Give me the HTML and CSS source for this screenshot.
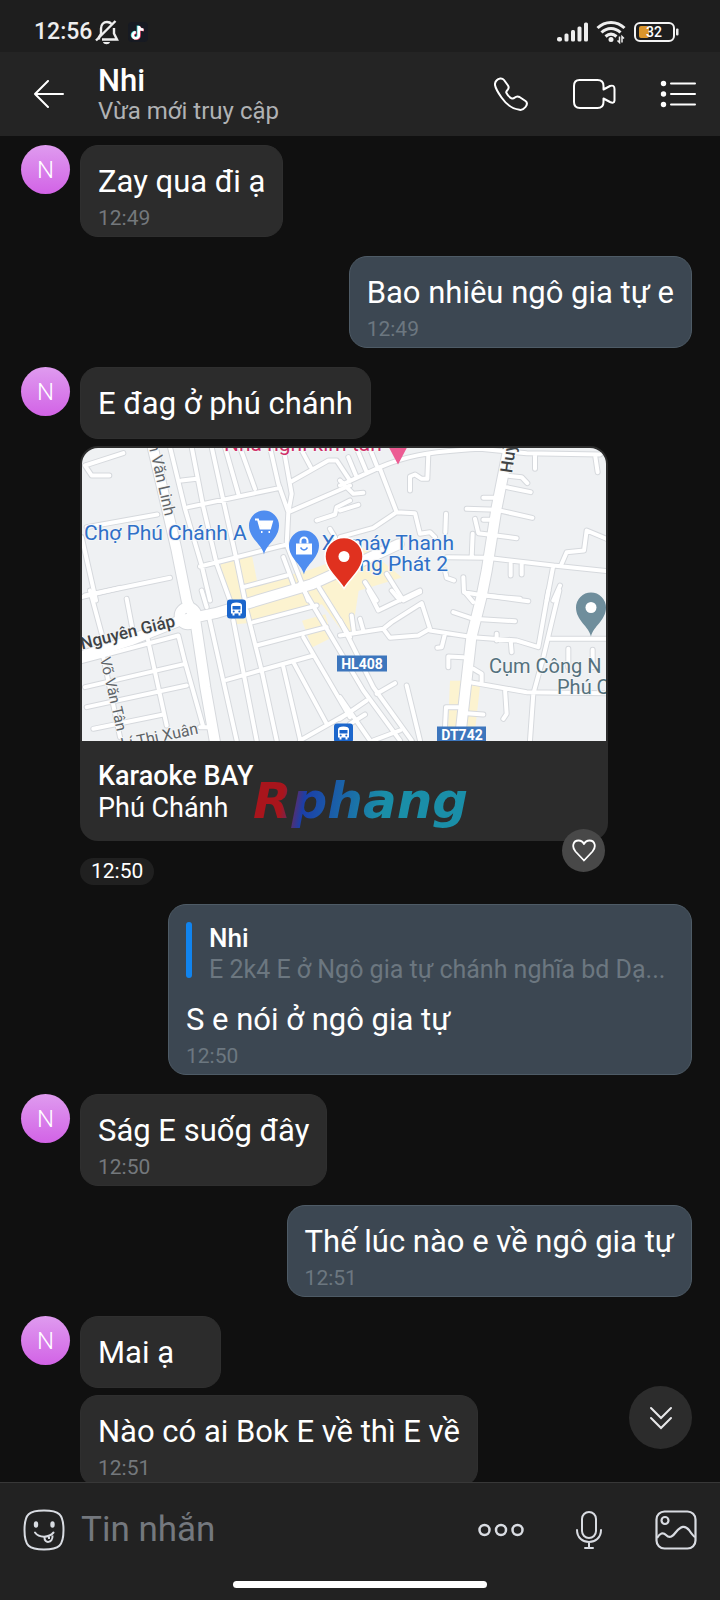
FILE: index.html
```html
<!DOCTYPE html>
<html lang="vi">
<head>
<meta charset="utf-8">
<meta name="viewport" content="width=device-width, initial-scale=1">
<title>Nhi</title>
<link rel="stylesheet" href="styles.css">
</head>
<body>
<div class="app">
  <div class="status">
    <span class="clock">12:56</span>
    <svg class="bell" width="24" height="26" viewBox="0 0 24 26" fill="none" stroke="#eee" stroke-width="2.400">
      <path d="M4 20.500V18L6 15V9.500C6 5.500 8.500 3 12 3C14 3 15.500 3.700 16.600 5M19 9V14.500L22 20.500H7"/>
      <path d="M1 21.500L20.500 2"/><path d="M8 23H15C14.500 26 8.500 26 8 23Z" fill="#eee" stroke="none"/>
    </svg>
    <svg class="tiktok" width="20" height="20" viewBox="0 0 20 20">
      <rect width="20" height="20" rx="4" fill="#171a22"/>
      <g fill="none" stroke-width="2.600">
        <path d="M10 3.500V13A3 3 0 1 1 7 10M10 4C10.500 6.500 12.500 7.500 15 7.500" stroke="#3fd9dc"/>
        <path d="M11.500 4.500V13.500A3 3 0 1 1 8.500 10.800M11.500 5C12 7 13.500 8 16 8.200" stroke="#e23a62"/>
        <path d="M10.800 4V13.200A3 3 0 1 1 7.800 10.300M10.800 4.500C11.300 6.700 13 7.700 15.500 7.800" stroke="#fff"/>
      </g>
    </svg>
    <svg class="signal" width="32" height="20" viewBox="0 0 32 20" fill="#eee">
      <rect x="0" y="15" width="5" height="4.500" rx="2"/><rect x="7.500" y="11.500" width="4" height="8" rx="1.500"/><rect x="14" y="8" width="4" height="11.500" rx="1.500"/><rect x="20.500" y="4.500" width="4" height="15" rx="1.500"/><rect x="27" y="0.500" width="4" height="19" rx="1.500"/>
    </svg>
    <svg class="wifi" width="30" height="24" viewBox="0 0 30 24" fill="none" stroke="#eee" stroke-width="3">
      <path d="M1.500 8C9 0.500 21 0.500 28.500 8"/><path d="M5.500 12.500C11 7 19 7 24.500 12.500"/><path d="M9.500 16.500C13 13.500 17 13.500 20.500 16.500"/>
      <circle cx="15" cy="19.500" r="2.500" fill="#eee" stroke="none"/>
      <path d="M23.500 16.500V22.500L21.500 20.500M26 22.500V16.500L28 18.500" stroke-width="1.500"/>
    </svg>
    <svg class="battery" width="46" height="20" viewBox="0 0 46 20">
      <rect x="1" y="1" width="39" height="18" rx="5" fill="none" stroke="#f4f4f4" stroke-width="2"/>
      <rect x="5" y="4" width="10" height="12" rx="2" fill="#dc962c"/>
      <rect x="42" y="6.500" width="2.500" height="7" rx="1" fill="#eee"/>
      <text x="20" y="15" text-anchor="middle" class="battery-text">32</text>
    </svg>
  </div>

  <header class="header">
    <button class="icon-button back" aria-label="Quay lại">
      <svg width="30" height="28" viewBox="0 0 30 28" fill="none" stroke="#fff" stroke-width="2" stroke-linecap="round" stroke-linejoin="round"><path d="M14 1L1 14L14 27M1 14H29"/></svg>
    </button>
    <div class="contact">
      <h1 class="contact-name">Nhi</h1>
      <p class="contact-state">Vừa mới truy cập</p>
    </div>
    <nav class="actions">
      <button class="icon-button" aria-label="Gọi thoại">
        <svg width="34" height="34" viewBox="0 0 34 34" fill="none" stroke="#fff" stroke-width="2" stroke-linejoin="round"><path d="M2.500 3.500C4.500 1.200 8 .5 10 3L14 8.500C15.500 11 14.500 12 13.500 13C12 14.500 12 15.500 12.500 16C13.500 18 16 20.500 17.500 21.300C19 22 19.500 21.800 20.500 20.800C22 19.500 23.500 19 25.500 20L31.500 24C33.500 25.500 33 28 31.500 30C30 32 28 33.200 25.500 32.800C19 32 12 27 7.500 20.500C4 15.500 1.500 11 1 8C.8 6 1.500 4.500 2.500 3.500Z"/></svg>
      </button>
      <button class="icon-button" aria-label="Gọi video">
        <svg width="44" height="32" viewBox="0 0 44 32" fill="none" stroke="#fff" stroke-width="2" stroke-linejoin="round"><path d="M7.500 2H25.500C29.500 2 31.500 4 31.500 8V11.500L38 8Q42.500 6.500 42.500 11V22.500Q42 26 38 24L31.500 20.500V24C31.500 28 29.500 30 25.500 30H8C4 30 2 28 2 24V8C2 4 4 2 7.500 2Z"/></svg>
      </button>
      <button class="icon-button" aria-label="Tùy chọn">
        <svg width="36" height="28" viewBox="0 0 36 28" fill="#fff" stroke="#fff" stroke-width="2" stroke-linecap="round"><path d="M11 3.500H35M11 14H35M11 24.500H35"/><g stroke="none"><circle cx="3.500" cy="3.500" r="2.700"/><circle cx="3.500" cy="14" r="2.700"/><circle cx="3.500" cy="24.500" r="2.700"/></g></svg>
      </button>
    </nav>
  </header>

  <div class="chat-wrap">
  <main class="chat">
    <section class="row">
      <span class="avatar">N</span>
      <div class="stack"><div class="bubble"><p class="text">Zay qua đi ạ</p><time class="time">12:49</time></div></div>
    </section>
    <section class="row sent">
      <div class="bubble"><p class="text">Bao nhiêu ngô gia tự e</p><time class="time">12:49</time></div>
    </section>
    <section class="row">
      <span class="avatar">N</span>
      <div class="stack">
        <div class="bubble bare"><p class="text">E đag ở phú chánh</p></div>
        <article class="card">
          <svg class="map" viewBox="0 0 524 294" preserveAspectRatio="xMidYMid slice">
            <defs>
              <g id="minor">
                <g transform="translate(-36 -21)"><path d="M45 75L160 38M45 75L65 105H118M50 260L262 222M45 465L300 412M35 290L78 480M300 20L345 205L395 375L420 480M365 20L400 200L440 370L480 480M425 20L460 180L500 360L525 480M465 20L505 160M510 20L555 145M335 120L380 115M355 200L630 142M600 20L625 130L655 215M640 20L665 160L655 215L650 312M655 215L840 135M660 125L775 60L800 60L840 120M690 20L722 80M740 240L795 222L800 200L840 180M780 265L795 290M390 378L650 312L715 480M520 440L650 405M640 350L670 430"/></g>
                <g transform="translate(774 -21)"><path d="M0 135L120 80C190 50 250 34 420 25L560 38L780 42M120 85L170 215L225 218L240 280L270 275L285 290M170 215L100 262L0 290M265 40L262 115H245L225 102L210 108V150M585 42V85M765 42L773 95M500 105L545 110L562 128M500 140L572 155M430 172H470M380 205L470 208L577 232M430 238H460M405 235L415 278L530 293M318 220L316 275M398 280L395 350M320 350L440 352L640 375L800 392M800 295L740 270L732 330L680 335L665 370M512 370V405M545 372V402M640 375L620 480M660 435L640 480M370 410L372 455L430 465L540 475M315 390L320 412L342 420M140 400L190 480L240 455M75 425L110 480M25 50L50 110M55 35L80 95M90 25L110 75M0 120L40 160L70 157M0 210L55 193"/></g>
                <g transform="translate(-36 429)"><path d="M60 0L95 130M35 20L150 -8M170 25L190 130M35 212L325 135L345 215L400 410M230 130L290 405M45 290L345 220M50 350L350 285M70 415L280 372M395 0L410 50M415 70L500 450M490 90L560 450M530 60L575 240L620 450M470 268L730 195M550 95L740 45M560 165L770 110M640 230L690 445M670 215L770 400M700 140L840 380M690 -20L880 300L990 450M740 -20L840 140M690 450L840 365M100 200L150 440M390 410H415"/></g>
                <g transform="translate(774 429)"><path d="M0 135L130 115L155 95L245 38L270 115L235 135L150 142L130 115M35 75L42 125M60 85L70 120M85 0L115 60L240 0M155 0L180 30M270 120L400 140L530 150L595 170L625 0M315 130L305 170L292 172M340 65L400 85L525 92M375 5L400 35M440 15L565 32M470 130V150M512 150L515 185M625 145H800M658 0L610 200L580 310L570 450M390 275L560 305L800 308M495 295L500 370L490 385M325 230V198L370 200M400 235L425 250V275M380 368L430 372M315 410L318 350H355M0 90L100 290L215 450M200 285L240 450M110 310L165 278M0 385L80 330M0 320L90 450M30 400L75 372M100 450L180 420M685 175V230M758 178V230"/></g>
              </g>
              <g id="major">
                <path d="M210 -10L254 179L284 309L314 459L340 520L370 720L400 890M-20 632L144 579L294 519L400 497L690 410L800 360L950 290M1282 -10L1244 180L1214 370L1198 450L1168 570L1150 730L1132 890"/>
                <circle cx="318" cy="505" r="25"/>
              </g>
            </defs>
            <rect width="524" height="294" fill="#eff1f3"/>
            <g transform="scale(.33333)">
              <g fill="#fcf3d0"><path d="M415 350L510 325L525 400L660 375L760 340L850 300L960 390L830 430L810 560L780 550L720 470L520 525L460 530ZM660 520L730 500L750 570L690 600ZM1104 700H1196L1180 840H1098Z"/></g>
              <path d="M520 342L610 318L625 375L530 400Z" fill="#eff1f3"/>
              <use href="#minor" class="road-edge"/><use href="#major" class="avenue-edge"/>
              <use href="#minor" class="road"/><use href="#major" class="avenue"/>
            </g>
            <g class="map-halo">
              <text x="142" y="3" class="map-pink">Nhà nghỉ kim tân</text>
              <text x="2" y="92" class="map-blue">Chợ Phú Chánh A</text>
              <text x="372" y="102" text-anchor="end" class="map-blue">Xe máy Thanh</text>
              <text x="366" y="123" text-anchor="end" class="map-blue">ng Phát 2</text>
              <text x="407" y="225" class="map-slate">Cụm Công N</text>
              <text x="475" y="246" class="map-slate">Phú C</text>
              <text transform="translate(83 69) rotate(77)" text-anchor="end" class="map-street">n Văn Linh</text>
              <text transform="translate(430 26) rotate(-82)" class="map-avenue">Huỳnh</text>
              <text transform="translate(0 202) rotate(-14)" class="map-avenue">Nguyên Giáp</text>
              <text transform="translate(18 211) rotate(77)" class="map-lane">Võ Văn Tân</text>
              <text transform="translate(117 286) rotate(-12)" text-anchor="end" class="map-street">Lí Thị Xuân</text>
            </g>
            <rect x="255" y="208" width="50" height="16" fill="#3d76bd"/><text x="280" y="221" text-anchor="middle" class="map-badge">HL408</text>
            <rect x="355" y="279" width="49" height="16" fill="#3d76bd"/><text x="380" y="292" text-anchor="middle" class="map-badge">DT742</text>
            <defs>
              <g id="bus"><rect width="19" height="19" rx="3" fill="#1b66cc"/><path d="M4 6Q4 3 9.500 3T15 6V14H13.500V16H11.500V14H7.500V16H5.500V14H4Z" fill="#fff"/><path d="M5.500 6.500H13.500V10H5.500Z" fill="#1b66cc"/><circle cx="6.700" cy="12" r="1" fill="#1b66cc"/><circle cx="12.300" cy="12" r="1" fill="#1b66cc"/></g>
              <path id="pin" d="M0 29C-2 19-15 13-15 0A15 15 0 1 1 15 0C15 13 2 19 0 29Z"/>
            </defs>
            <use href="#bus" x="145" y="152"/><use href="#bus" x="252" y="276"/>
            <path d="M307 0H325L316 17Z" fill="#ec5c93"/>
            <use href="#pin" x="182" y="78" fill="#4f8df0"/>
            <path d="M173 72H176L178.500 81H188L190 74H177M179 84.500H180.500M186.500 84.500H188" fill="none" stroke="#fff" stroke-width="2"/><path d="M177 74H190L188 81H179Z" fill="#fff"/>
            <use href="#pin" x="222" y="98" fill="#4f8df0"/>
            <path d="M214 96H230V107H214Z" fill="#fff"/><path d="M218.500 96V93.500A3.500 3.500 0 0 1 225.500 93.500V96" fill="none" stroke="#fff" stroke-width="2"/><path d="M218.500 100Q222 105 225.500 100" fill="none" stroke="#4f8df0" stroke-width="1.500"/>
            <use href="#pin" x="509" y="160" fill="#6f8e9c"/><circle cx="509" cy="160" r="5.500" fill="#fff"/>
            <path d="M262 141C257 132 243 122 243 109A19 19 0 1 1 281 109C281 122 267 132 262 141Z" fill="#e0311f" stroke="#fff" stroke-width="1.500"/><circle cx="262" cy="109" r="5.500" fill="#fff"/>
          </svg>
          <div class="place"><p class="place-name">Karaoke BAY</p><p class="place-area">Phú Chánh</p></div>
          <span class="watermark">Rphang</span>
          <button class="like" aria-label="Thích">
            <svg width="24" height="23" viewBox="0 0 24 23" fill="none" stroke="#fff" stroke-width="1.800" stroke-linejoin="round"><path d="M12 21.500L3.500 12.500C-.5 8 1 1.500 6.500 1.500C9 1.500 11 3 12 5C13 3 15 1.500 17.500 1.500C23 1.500 24.500 8 20.500 12.500Z"/></svg>
          </button>
        </article>
        <time class="pill">12:50</time>
      </div>
    </section>
    <section class="row sent">
      <div class="bubble reply">
        <blockquote class="quote"><p class="quote-name">Nhi</p><p class="quote-text">E 2k4 E ở Ngô gia tự chánh nghĩa bd Dạ...</p></blockquote>
        <p class="text">S e nói ở ngô gia tự</p><time class="time">12:50</time>
      </div>
    </section>
    <section class="row">
      <span class="avatar">N</span>
      <div class="stack"><div class="bubble"><p class="text">Ság E suốg đây</p><time class="time">12:50</time></div></div>
    </section>
    <section class="row sent">
      <div class="bubble"><p class="text">Thế lúc nào e về ngô gia tự</p><time class="time">12:51</time></div>
    </section>
    <section class="row">
      <span class="avatar">N</span>
      <div class="stack">
        <div class="bubble bare"><p class="text">Mai ạ</p></div>
        <div class="bubble"><p class="text">Nào có ai Bok E về thì E về</p><time class="time">12:51</time></div>
      </div>
    </section>
  </main>
  <button class="jump" aria-label="Xuống cuối">
    <svg width="24" height="24" viewBox="0 0 24 24" fill="none" stroke="#e8e8ea" stroke-width="2" stroke-linecap="round"><path d="M2 2L12 12L22 2M2 12L12 22L22 12"/></svg>
  </button>
  </div>

  <footer class="footer">
    <form class="composer">
      <button type="button" class="icon-button" aria-label="Nhãn dán">
        <svg width="42" height="42" viewBox="0 0 42 42" fill="none" stroke="#d9dce2" stroke-width="2"><path d="M21 1.500C36 1.500 40.500 5 40.500 21S36 40.500 21 40.500S1.500 37 1.500 21S6 1.500 21 1.500Z"/><path d="M12 23.500C16 29 26 29 30.500 23.500" stroke-linecap="round"/><path d="M21.500 28C21 35 30 34.500 29.500 26.500M26 27.500V30"/><ellipse cx="13" cy="15.500" rx="2.200" ry="3.300" fill="#d9dce2" stroke="none"/><ellipse cx="29.500" cy="15.500" rx="2.200" ry="3.300" fill="#d9dce2" stroke="none"/></svg>
      </button>
      <input class="entry" type="text" placeholder="Tin nhắn" aria-label="Tin nhắn">
      <button type="button" class="icon-button" aria-label="Thêm">
        <svg width="46" height="14" viewBox="0 0 46 14" fill="none" stroke="#d9dce2" stroke-width="2.500"><circle cx="6.500" cy="7" r="5"/><circle cx="23" cy="7" r="5"/><circle cx="39.500" cy="7" r="5"/></svg>
      </button>
      <button type="button" class="icon-button mic" aria-label="Ghi âm">
        <svg width="26" height="38" viewBox="0 0 26 38" fill="none" stroke="#d9dce2" stroke-width="2" stroke-linecap="round"><rect x="6" y="1" width="14" height="26" rx="7"/><path d="M1 19C1 35 25 35 25 19M13 31V37M9 37H17"/></svg>
      </button>
      <button type="button" class="icon-button" aria-label="Gửi ảnh">
        <svg width="42" height="40" viewBox="0 0 42 40" fill="none" stroke="#d9dce2" stroke-width="2.200"><rect x="1.500" y="1.500" width="39" height="37" rx="8"/><circle cx="10" cy="10.500" r="3.500"/><path d="M2 28C5 23 8 22 11 25C15 29 18 26 21 22C26 16 30 15 34 20C36 23 38 26 40 27"/></svg>
      </button>
    </form>
    <div class="home"></div>
  </footer>
</div>
</body>
</html>
```
FILE: styles.css
```css
* { box-sizing: border-box; }
body { margin: 0; background: #101010; color: #fff; font-family: Roboto, "Noto Sans", sans-serif; }
h1, p, blockquote { margin: 0; }
button { border: 0; padding: 0; background: none; color: inherit; font: inherit; }
svg { display: block; flex: none; }
.app { display: flex; flex-direction: column; height: 100vh; }

.status { display: flex; align-items: center; height: 52px; padding: 12px 40px 0 34px; background: #1e1e1e; }
.clock { font-size: 23px; line-height: 28px; font-weight: 500; color: #eee; }
.bell { margin-left: 3px; }
.tiktok { margin-left: 9px; }
.signal { margin-left: auto; }
.wifi { margin-left: 7px; }
.battery { margin-left: 8px; }
.battery-text { font-size: 14px; font-weight: 500; fill: #fff; }

.header { display: flex; align-items: center; height: 84px; padding: 0 24px 0 34px; background: #242424; }
.icon-button { display: flex; align-items: center; justify-content: center; }
.contact { flex: 1; min-width: 0; margin-left: 34px; }
.contact-name { font-size: 31px; line-height: 34px; font-weight: 500; }
.contact-state { font-size: 24px; line-height: 26px; color: #b0b2b4; }
.actions { display: flex; align-items: center; gap: 44px; }

.chat-wrap { position: relative; flex: 1; min-height: 0; display: flex; flex-direction: column; }
.chat { flex: 1; min-height: 0; overflow: auto; scrollbar-width: none; display: flex; flex-direction: column; gap: 19px; padding: 9px 28px 8px 21px; }
.row { display: flex; flex: none; align-items: flex-start; gap: 10px; }
.sent { justify-content: flex-end; }
.avatar { flex: none; display: flex; align-items: center; justify-content: center; width: 49px; height: 49px; border-radius: 50%; background: linear-gradient(#df9bef, #d263e6); font-size: 24px; font-weight: 300; }
.stack { display: flex; flex-direction: column; align-items: flex-start; gap: 7px; flex: 1; min-width: 0; }
.bubble { min-width: 141px; max-width: 524px; padding: 16px 17px 5px; border: 1px solid #2f2f2f; border-radius: 18px; background: #2c2c2c; }
.sent .bubble { background: #3c4752; border-color: #4e5b66; }
.bubble.bare { padding-bottom: 14px; }
.text { font-size: 31px; line-height: 40px; }
.time { display: block; margin-top: 3px; font-size: 21px; line-height: 26px; color: #74787c; }
.sent .time { color: #6c7780; }

.card { position: relative; width: 100%; max-width: 528px; padding: 2px 2px 0; border-radius: 18px; background: #2c2c2c; }
.map { width: 100%; height: 293px; border-radius: 16px 16px 0 0; overflow: hidden; }
.place { padding: 19px 16px 17px; font-size: 27px; line-height: 32px; }
.place-name { font-weight: 500; }
.watermark { position: absolute; left: 173px; bottom: 10px; font: italic bold 50px/60px "DejaVu Sans", sans-serif; color: transparent; background: linear-gradient(100deg, #a9151c 15%, #1b3fa8 25%, #1a8ea8 60%); background-clip: text; -webkit-background-clip: text; }
.like { position: absolute; right: 3px; bottom: -31px; display: flex; align-items: center; justify-content: center; width: 43px; height: 43px; border-radius: 50%; background: #484848; }
.pill { margin-top: 10px; padding: 0 11px; border-radius: 14px; background: #202020; font-size: 21px; line-height: 27px; }

.reply { width: 524px; }
.sent .reply { padding-top: 17px; }
.quote { position: relative; margin-bottom: 14px; padding-left: 23px; }
.quote::before { content: ""; position: absolute; left: 0; top: 0; bottom: 8px; width: 6px; border-radius: 3px; background: #1184ee; }
.quote-name, .quote-text { font-size: 26px; line-height: 32px; white-space: nowrap; overflow: hidden; text-overflow: ellipsis; }
.quote-name { font-weight: 500; }
.quote-text { font-size: 25px; color: #6c7780; }
.jump { position: absolute; right: 28px; bottom: 33px; display: flex; align-items: center; justify-content: center; width: 63px; height: 63px; border-radius: 50%; background: #2c2c2c; }

.road-edge, .road, .avenue-edge, .avenue { fill: none; stroke-linecap: round; stroke-linejoin: round; }
.road-edge { stroke: #d6d9dd; stroke-width: 18; }
.road { stroke: #fff; stroke-width: 12; }
.avenue-edge { stroke: #d6d9dd; stroke-width: 36; }
.avenue { stroke: #fff; stroke-width: 30; }
.map-halo { paint-order: stroke; stroke: #f4f6f7; stroke-width: 2px; stroke-linejoin: round; }
.map-blue { font-size: 21px; fill: #2f70c8; }
.map-pink { font-size: 21px; fill: #cf2f68; }
.map-slate { font-size: 20px; fill: #55717d; }
.map-street { font-size: 16px; fill: #5f6468; }
.map-lane { font-size: 15px; fill: #5f6468; }
.map-avenue { font-size: 17px; font-weight: 500; fill: #3f4346; }
.map-badge { font-size: 14px; font-weight: 700; fill: #fff; }

.footer { flex: none; height: 118px; display: flex; flex-direction: column; align-items: center; border-top: 1px solid #383838; background: #222; }
.composer { display: flex; align-items: center; width: 100%; height: 94px; padding: 0 23px; }
.entry { flex: 1; min-width: 0; margin: 0 16px; padding: 0; border: 0; outline: 0; background: none; color: #fff; font: 35px/44px Roboto, "Noto Sans", sans-serif; }
.entry::placeholder { color: #74787e; opacity: 1; }
.mic { margin: 0 53px 0 52px; }
.home { width: 36%; max-width: 254px; height: 7px; margin-top: 4px; border-radius: 4px; background: #fff; }
```
